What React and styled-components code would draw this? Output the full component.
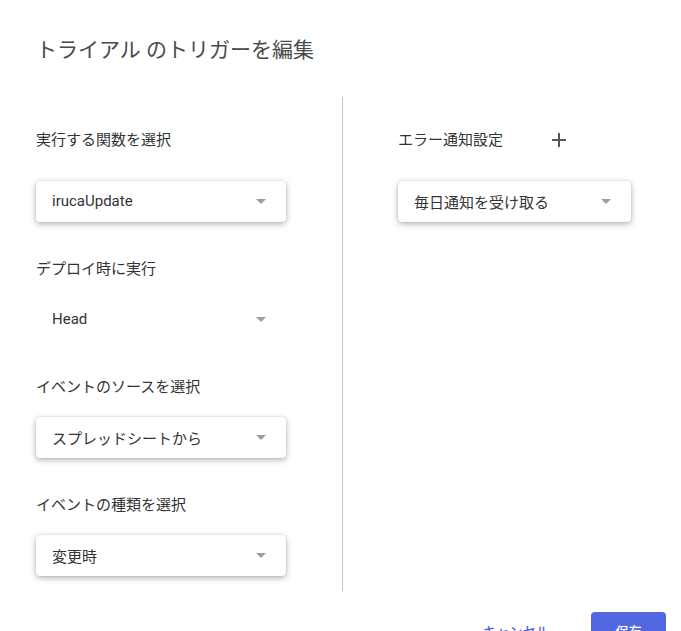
import React from "react";
import styled, { createGlobalStyle } from "styled-components";

const Global = createGlobalStyle`
  html, body { margin: 0; padding: 0; background: #fff; }
  body {
    font-family: Roboto, "Noto Sans CJK JP", "Noto Sans", sans-serif;
    color: #333;
    overflow: hidden;
  }
  * { box-sizing: border-box; }
`;

const Dialog = styled.div`
  width: 681px;
  height: 631px;
  overflow: hidden;
  display: flex;
  flex-direction: column;
`;

const Title = styled.h1`
  margin: 36px 0 33px 36px;
  font-size: 21px;
  line-height: 28px;
  font-weight: 400;
  color: #4a4a4a;
`;

const Body = styled.div`
  display: flex;
`;

const Column = styled.div`
  display: flex;
  flex-direction: column;
  padding: 23px 0 15px ${(p) => p.$padLeft}px;
  width: ${(p) => p.$width}px;
  border-right: ${(p) => (p.$divider ? "1px solid #c6c6c6" : "none")};
`;

const Section = styled.div`
  display: flex;
  flex-direction: column;
  & + & { margin-top: 37px; }
`;

const HeaderRow = styled.div`
  display: flex;
  align-items: center;
  height: 40px;
  margin-bottom: 21px;
`;

const Label = styled.div`
  font-size: 15px;
  line-height: 20px;
  color: #333;
  margin-bottom: ${(p) => (p.$inRow ? 0 : 20)}px;
`;

const IconButton = styled.button`
  width: 40px;
  height: 40px;
  margin-left: ${(p) => p.$offset}px;
  border: none;
  background: transparent;
  padding: 0;
  display: flex;
  align-items: center;
  justify-content: center;
  cursor: pointer;
`;

const Select = styled.div`
  width: ${(p) => p.$width}px;
  height: 41px;
  display: flex;
  align-items: center;
  justify-content: space-between;
  padding: 0 20px 1px 16px;
  border-radius: 4px;
  background: #fff;
  box-shadow: ${(p) =>
    p.$flat
      ? "none"
      : "0 2px 6px rgba(0,0,0,0.3), 0 0 2px rgba(0,0,0,0.12)"};
  font-size: 15px;
  color: #333;
`;

const Arrow = styled.span`
  width: 0;
  height: 0;
  border-left: 5px solid transparent;
  border-right: 5px solid transparent;
  border-top: 5px solid #9e9e9e;
`;

const Footer = styled.div`
  display: flex;
  justify-content: flex-end;
  align-items: flex-start;
  padding: 21px 15px 0 0;
  gap: 18px;
`;

const Button = styled.button`
  height: 36px;
  padding: 0 24px;
  border: none;
  border-radius: 4px;
  font-family: Roboto, "Noto Sans CJK JP", sans-serif;
  font-size: 13px;
  font-weight: 500;
  letter-spacing: 0.3px;
  cursor: pointer;
  background: ${(p) => (p.$primary ? "#5367e1" : "transparent")};
  color: ${(p) => (p.$primary ? "#fff" : "#4f63e0")};
`;

const PlusIcon = () => (
  <svg width="14" height="14" viewBox="0 0 14 14">
    <path d="M7 0v14M0 7h14" stroke="#555" strokeWidth="2" fill="none" />
  </svg>
);

const Field = ({ label, value, header, flat, width }) => (
  <Section>
    {header ? <HeaderRow>{header}</HeaderRow> : <Label>{label}</Label>}
    <Select $width={width} $flat={flat}>
      <span>{value}</span>
      <Arrow />
    </Select>
  </Section>
);

export default function App() {
  return (
    <Dialog>
      <Global />
      <Title>トライアル のトリガーを編集</Title>
      <Body>
        <Column $padLeft={36} $width={343} $divider>
          <Field
            header={<Label $inRow>実行する関数を選択</Label>}
            value="irucaUpdate"
            width={250}
          />
          <Field label="デプロイ時に実行" value="Head" width={250} flat />
          <Field label="イベントのソースを選択" value="スプレッドシートから" width={250} />
          <Field label="イベントの種類を選択" value="変更時" width={250} />
        </Column>
        <Column $padLeft={55} $width={338}>
          <Field
            header={
              <>
                <Label $inRow>エラー通知設定</Label>
                <IconButton $offset={36} aria-label="追加">
                  <PlusIcon />
                </IconButton>
              </>
            }
            value="毎日通知を受け取る"
            width={233}
          />
        </Column>
      </Body>
      <Footer>
        <Button>キャンセル</Button>
        <Button $primary>保存</Button>
      </Footer>
    </Dialog>
  );
}
